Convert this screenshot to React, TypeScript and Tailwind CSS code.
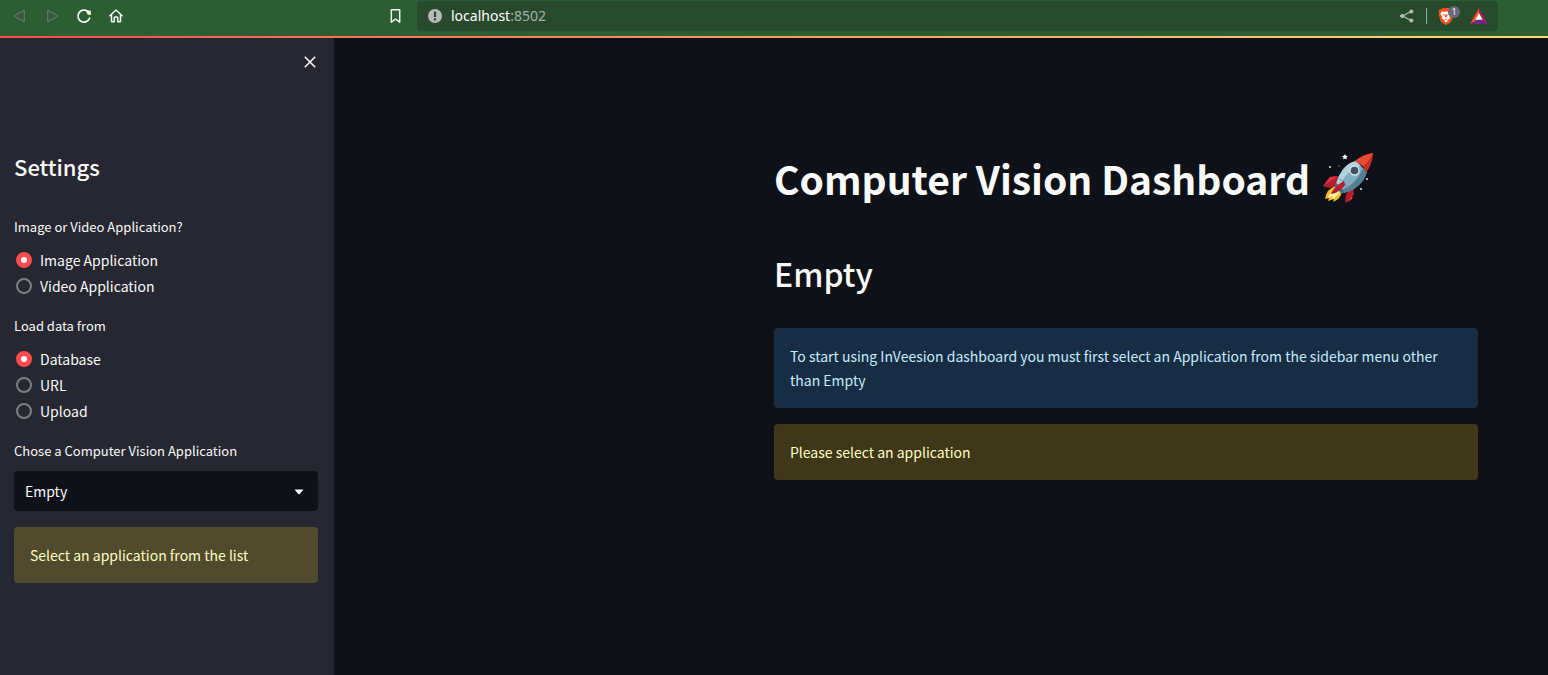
import { useState } from "react";
import type { ReactNode } from "react";

type RadioGroupProps = {
  legend: string;
  name: string;
  options: string[];
  value: string;
  onChange: (value: string) => void;
};

function RadioGroup({ legend, name, options, value, onChange }: RadioGroupProps) {
  return (
    <fieldset>
      <legend className="mb-[9px] text-[13px] leading-6">{legend}</legend>
      <div className="flex flex-col items-start gap-0.5">
        {options.map((option) => (
          <label key={option} className="flex cursor-pointer items-center gap-2 pl-0.5 leading-6">
            <input
              type="radio"
              name={name}
              value={option}
              checked={value === option}
              onChange={() => onChange(option)}
              className="size-4 shrink-0 appearance-none rounded-full border-2 border-[#7d7d85] bg-[#262730] checked:border-5 checked:border-[#ff4b4b] checked:bg-white"
            />
            {option}
          </label>
        ))}
      </div>
    </fieldset>
  );
}

function Alert({ className, children }: { className: string; children: ReactNode }) {
  return (
    <div role="alert" className={`rounded p-4 leading-6 ${className}`}>
      {children}
    </div>
  );
}

function ToolButton({ label, children }: { label: string; children: ReactNode }) {
  return (
    <button type="button" aria-label={label} className="flex size-4 shrink-0 items-center justify-center">
      {children}
    </button>
  );
}

function BrowserBar() {
  return (
    <header className="flex h-9 items-center bg-[#2b5f31] pb-1 font-['Noto_Sans',sans-serif] text-[#f2f5f2]">
      <nav aria-label="Browser" className="flex gap-4 pl-3">
        <ToolButton label="Back">
          <svg viewBox="0 0 16 16" className="size-4" fill="none" stroke="#66706b" strokeWidth="1.4" strokeLinejoin="round">
            <path d="M12.3 2.2v11.6L3.2 8.7a.8.8 0 0 1 0-1.4z" />
          </svg>
        </ToolButton>
        <ToolButton label="Forward">
          <svg viewBox="0 0 16 16" className="size-4" fill="none" stroke="#66706b" strokeWidth="1.4" strokeLinejoin="round">
            <path d="M3.7 2.2v11.6l9.1-5.1a.8.8 0 0 0 0-1.4z" />
          </svg>
        </ToolButton>
        <ToolButton label="Reload">
          <svg viewBox="0 0 16 16" className="size-4" fill="none" stroke="currentColor" strokeWidth="1.7" strokeLinecap="round">
            <path d="M13.6 10.2A6 6 0 1 1 11.6 3.3" />
            <path d="M10.6 3.2h3.6v3.2L12 6z" fill="currentColor" strokeWidth="1.2" strokeLinejoin="round" />
          </svg>
        </ToolButton>
        <ToolButton label="Home">
          <svg viewBox="0 0 16 16" className="size-4" fill="none" stroke="currentColor" strokeWidth="1.5" strokeLinecap="round" strokeLinejoin="round">
            <path d="M1.8 7.8 8 2l6.2 5.8M3.5 6.6v7.1h2.7V10.6a1.8 1.8 0 0 1 3.6 0v3.1h2.7V6.6" />
          </svg>
        </ToolButton>
      </nav>
      <div className="ml-auto flex w-3/4 items-center">
        <div className="flex w-[30px] shrink-0">
          <ToolButton label="Bookmark">
            <svg viewBox="0 0 16 16" className="size-4" fill="none" stroke="currentColor" strokeWidth="1.5" strokeLinejoin="round">
              <path d="M4.300 1.800h8.400v12.400L8.500 11l-4.200 3.200z" />
            </svg>
          </ToolButton>
        </div>
        <div className="mr-[50px] flex h-[30px] flex-1 items-center rounded bg-[#274a2c] px-2.5">
          <svg viewBox="0 0 16 16" className="size-4 shrink-0" aria-hidden="true">
            <circle cx="8" cy="8" r="7" fill="#b5bcb6" />
            <rect x="6.9" y="3.6" width="2.2" height="5.4" fill="#274a2c" />
            <rect x="6.9" y="10.3" width="2.2" height="2.1" fill="#274a2c" />
          </svg>
          <a href="http://localhost:8502" className="ml-2 text-sm text-[#a3b3a5]">
            <span className="text-white">localhost</span>:8502
          </a>
          <div className="ml-auto flex items-center">
            <ToolButton label="Share">
              <svg viewBox="0 0 16 16" className="size-4" fill="#b9c3ba" stroke="#b9c3ba">
                <path d="M12 3.6 3.7 8l8.3 4.4" fill="none" strokeWidth="1.1" />
                <circle cx="12.3" cy="3.5" r="1.6" />
                <circle cx="3.2" cy="8" r="1.6" />
                <circle cx="12.3" cy="12.5" r="1.6" />
              </svg>
            </ToolButton>
            <span className="mx-[11px] h-4 w-px bg-[#9aa89b]" />
            <button type="button" aria-label="Shields" className="relative mr-3 flex h-5 w-5 items-center">
              <svg viewBox="0 0 18 20" className="h-[18px] w-4">
                <path d="M5 1h8l1.500 1.600 1.800-.2 1 2.400-.6 1.700.5 2-2 6.800c-.3 1-.9 1.600-1.700 2.200L9 20l-4.500-2.500c-.8-.6-1.400-1.200-1.700-2.200L.8 8.500l.5-2L.7 4.800l1-2.400 1.800.2z" fill="#f4511e" />
                <path d="M4.200 5 7 5.300 9 4.800l2 .5 2.800-.3 1.600 2.600-2.400 3.200.6 1.800-2 1.600-1 .2L9 13.200l-1.600 1.200-1-.2-2-1.600.6-1.800L2.600 7.600z" fill="#fff" />
                <path d="m4.800 7.800 3 .8-.5 1.400zm8.400 0-3 .8.5 1.400zM8.300 8h1.400l.4 3L9 12l-1.100-1z" fill="#f4511e" />
                <path d="m6.700 15.400 2.300-1.200 2.300 1.200L9 17.300z" fill="#fff" />
              </svg>
              <span className="absolute top-0 left-2.5 flex size-3 items-center justify-center rounded-full bg-[#666a7a] text-[8px] text-white">1</span>
            </button>
            <button type="button" aria-label="Rewards" className="flex h-4 w-[18px] shrink-0">
              <svg viewBox="0 0 18 16" className="h-4 w-[18px]">
                <path d="M9 0 0 16l9-5z" fill="#ff4b25" />
                <path d="m9 0 9 16-9-5z" fill="#9e1f63" />
                <path d="M0 16h18l-9-5z" fill="#662d91" />
                <path d="m9 5 3.700 6.800H5.300z" fill="#fff" />
              </svg>
            </button>
          </div>
        </div>
      </div>
    </header>
  );
}

function Rocket() {
  return (
    <svg viewBox="0 0 52 52" className="size-[52px] shrink-0" role="img" aria-label="Rocket">
      <path d="M17 24 8 25 1 34q5 3 13 1zM31 34l-7 8-1 9 7-4 2-12z" fill="#b71c2b" />
      <path d="m16 24-8 1-7 9 11-7zM31 35l1 7-7 8 5-3 2-11z" fill="#db3445" />
      <path d="M14 34Q4 37 3 47l4-1-1 3 6-2-1 3q8-3 9-11z" fill="#f5bd35" />
      <path d="M15 36Q8 39 6 46l4-2 1 3q6-4 7-8z" fill="#fff3a0" />
      <path d="M34 9Q20 12 14 32l8 9Q40 36 45 20z" fill="#82aebf" />
      <path d="M34 9Q20 12 14 32l3 3Q25 17 39 14z" fill="#b3d2dc" />
      <path d="M45 20Q40 36 22 41l-3-3q15-5 22-22z" fill="#527f92" />
      <path d="M14 31q3 1 8 9l-2 2-8-8z" fill="#476f80" />
      <path d="M17 27q6 2 9 10" fill="none" stroke="#6694a6" strokeWidth="1" />
      <path d="M33 9Q42 2 51 1q0 10-7 20-1-7-11-12z" fill="#c63121" />
      <path d="M33 9Q42 2 51 1q-4 9-10 13-3-3-8-5z" fill="#ea4b35" />
      <circle cx="32.500" cy="18.500" r="5.200" fill="#d7e3e7" />
      <circle cx="32.500" cy="18.500" r="3.800" fill="#40545f" />
      <path d="M22 29q-7 3-13 12l1 1q8-2 13-9z" fill="#b71c2b" />
      <path d="m23 2 .9 1.800 2 .3-1.500 1.400.4 2-1.800-1-1.800 1 .4-2L20 4.100l2-.3z" fill="#fff" />
      <g fill="#dce8ec">
        <circle cx="8" cy="15" r="1" />
        <circle cx="17" cy="14" r=".6" />
        <circle cx="45" cy="27" r="1" />
        <circle cx="39" cy="37" r="1.100" />
      </g>
    </svg>
  );
}

export default function App() {
  const [kind, setKind] = useState("Image Application");
  const [source, setSource] = useState("Database");

  return (
    <div className="flex min-h-screen flex-col bg-[#0e1117] font-['Noto_Sans_CJK_SC',sans-serif] text-sm text-[#fafafa]">
      <BrowserBar />
      <div className="h-0.5 bg-linear-to-r from-[#ff4b4b] to-[#ffd87a]" />
      <div className="flex flex-1">
        <aside className="w-[334px] shrink-0 bg-[#262730] pr-4 pl-3.5">
          <div className="flex justify-end pt-4">
            <button type="button" aria-label="Close sidebar" className="flex size-4 items-center justify-center">
              <svg viewBox="0 0 16 16" className="size-4" fill="none" stroke="currentColor" strokeWidth="1.6">
                <path d="m2.800 2.800 10.400 10.400M13.200 2.800 2.800 13.200" />
              </svg>
            </button>
          </div>
          <h2 className="mt-[78px] text-[22px] leading-9 font-medium">Settings</h2>
          <form className="mt-[31px] flex flex-col gap-4">
            <RadioGroup
              legend="Image or Video Application?"
              name="kind"
              options={["Image Application", "Video Application"]}
              value={kind}
              onChange={setKind}
            />
            <RadioGroup
              legend="Load data from"
              name="source"
              options={["Database", "URL", "Upload"]}
              value={source}
              onChange={setSource}
            />
            <div>
              <label htmlFor="application" className="mb-2 block text-[13px] leading-6">
                Chose a Computer Vision Application
              </label>
              <div className="relative">
                <select id="application" className="h-10 w-full appearance-none rounded bg-[#0e1117] pr-10 pl-[11px]">
                  <option>Empty</option>
                </select>
                <svg viewBox="0 0 10 6" className="pointer-events-none absolute top-[18px] right-3.5 h-[6px] w-2.5" fill="currentColor" aria-hidden="true">
                  <path d="M.5.5h9L5.700 5a1 1 0 0 1-1.400 0z" />
                </svg>
              </div>
            </div>
            <Alert className="bg-[#504b2e] text-[#ffffc2]">Select an application from the list</Alert>
          </form>
        </aside>
        <main className="flex flex-1 justify-end pr-[70px] pl-8">
          <div className="w-full max-w-[704px] pt-28">
            <h1 className="flex items-center gap-3 text-[39px] leading-[56px] font-bold">
              Computer Vision Dashboard
              <Rocket />
            </h1>
            <h2 className="mt-[45px] text-[32px] leading-[44px] font-medium">Empty</h2>
            <div className="mt-[33px] flex flex-col gap-4">
              <Alert className="bg-[#172d43] text-[#c7ebff]">
                To start using InVeesion dashboard you must first select an Application from the sidebar menu other than Empty
              </Alert>
              <Alert className="bg-[#3e3719] text-[#ffffc2]">Please select an application</Alert>
            </div>
          </div>
        </main>
      </div>
    </div>
  );
}
